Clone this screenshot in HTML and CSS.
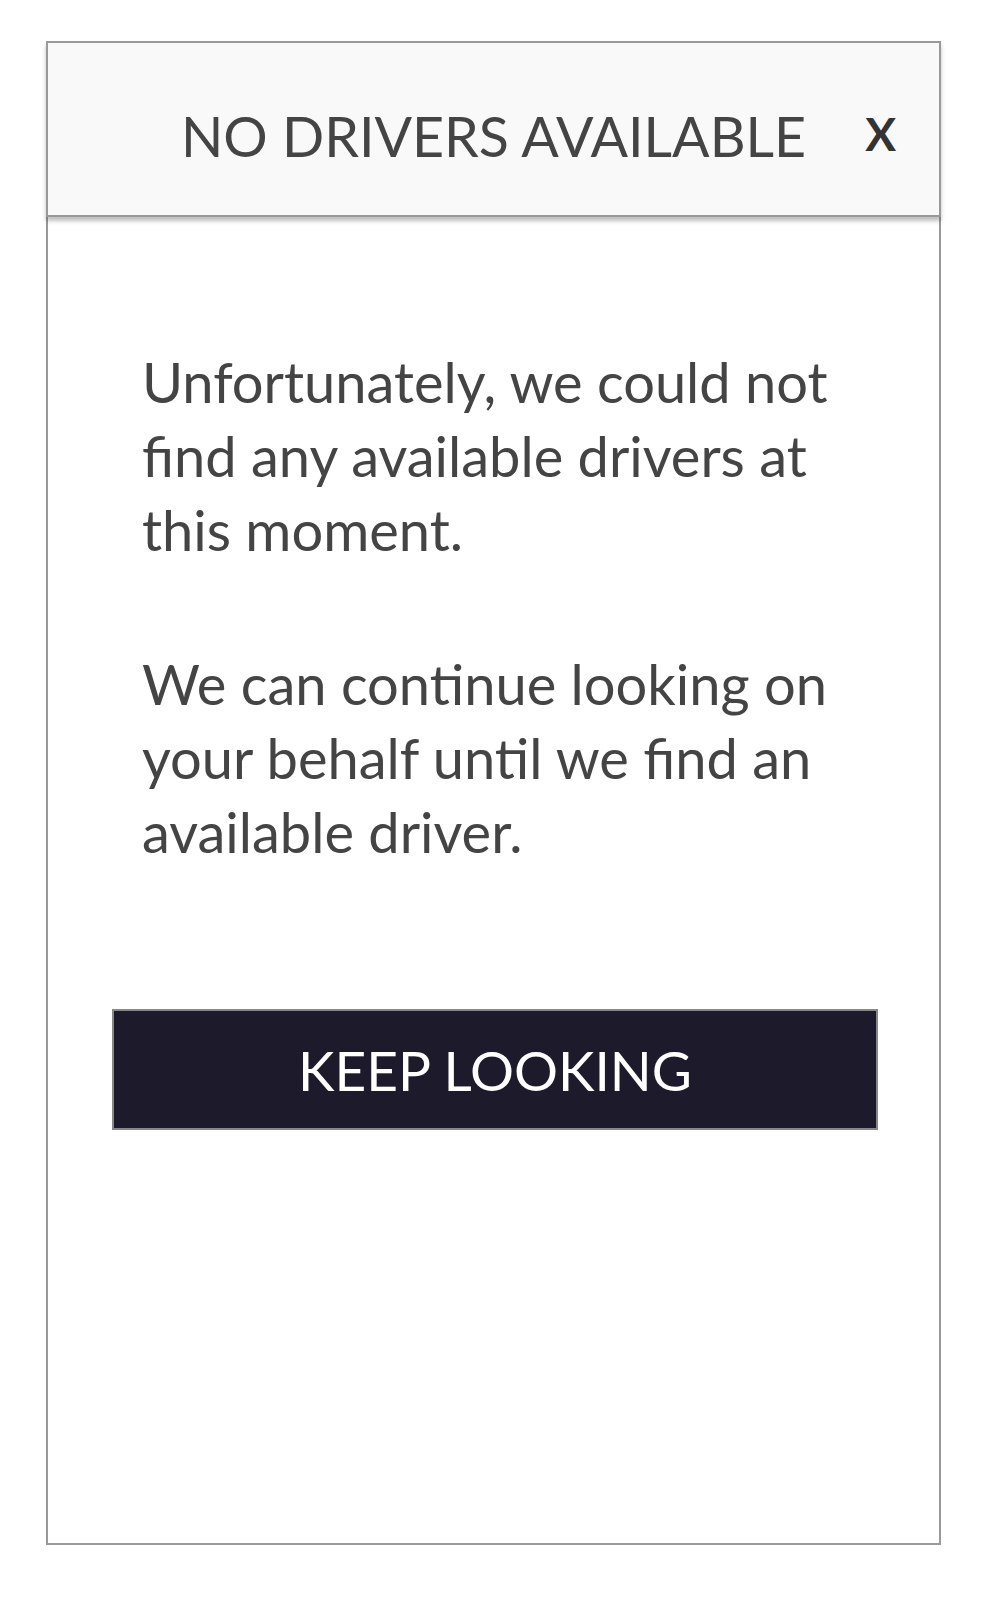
FILE: index.html
```html
<!DOCTYPE html>
<html lang="en">
<head>
    <meta charset="UTF-8">
    <meta name="viewport" content="width=device-width, initial-scale=1.0">
    <title>No drivers available</title>
    <link rel="stylesheet" href="styles.css">
</head>
<body>
    <div class="dialog">
        <header class="dialog-header">
            <h1 class="dialog-title">NO DRIVERS AVAILABLE</h1>
            <a href="#" class="dialog-close">X</a>
        </header>

        <main class="dialog-body">
            <p>Unfortunately, we could not find any available drivers at this moment.</p>
            <p>We can continue looking on your behalf until we find an available driver.</p>
            <button type="button" class="btn-keep">KEEP LOOKING</button>
        </main>
    </div>
</body>
</html>
```

FILE: styles.css
```css
/* --- base --- */
:root {
    --text-color: #444;
    --border-color: #999;
    --button-color: #1c1a2b;
    --font-family: Lato, "Open Sans", "Liberation Sans", sans-serif;
}

* {
    box-sizing: border-box;
}

body {
    margin: 0;
    background: #fff;
    color: var(--text-color);
    font-family: var(--font-family);
}

/* --- dialog frame --- */
.dialog {
    width: 895px;
    height: 1504px;
    margin: 41px 0 0 46px;
    border: 2px solid var(--border-color);
    background: #fff;
}

.dialog-header {
    position: relative;
    height: 176px;
    margin: -2px -2px 0 -2px;
    padding-top: 12px;
    border: 2px solid var(--border-color);
    background: #f9f9f9;
    box-shadow: 0 4px 4px rgba(0, 0, 0, 0.25);
    display: flex;
    align-items: center;
    justify-content: center;
}

.dialog-title {
    margin: 0;
    font-size: 55.5px;
    font-weight: 400;
    color: var(--text-color);
}

.dialog-close {
    position: absolute;
    right: 43px;
    top: 50%;
    transform: translateY(-42%);
    font-size: 46px;
    font-weight: 700;
    color: #333;
    text-decoration: none;
}

/* --- body --- */
.dialog-body {
    padding: 128px 61px 0 64px;
}

.dialog-body p {
    margin: 0 0 80px 0;
    padding: 0 30px;
    font-size: 56px;
    line-height: 74px;
    color: var(--text-color);
}

.btn-keep {
    display: block;
    width: 100%;
    height: 121px;
    margin-top: 140px;
    border: 2px solid #888;
    background: var(--button-color);
    color: #fff;
    font-family: var(--font-family);
    font-size: 55px;
    cursor: pointer;
}
```
